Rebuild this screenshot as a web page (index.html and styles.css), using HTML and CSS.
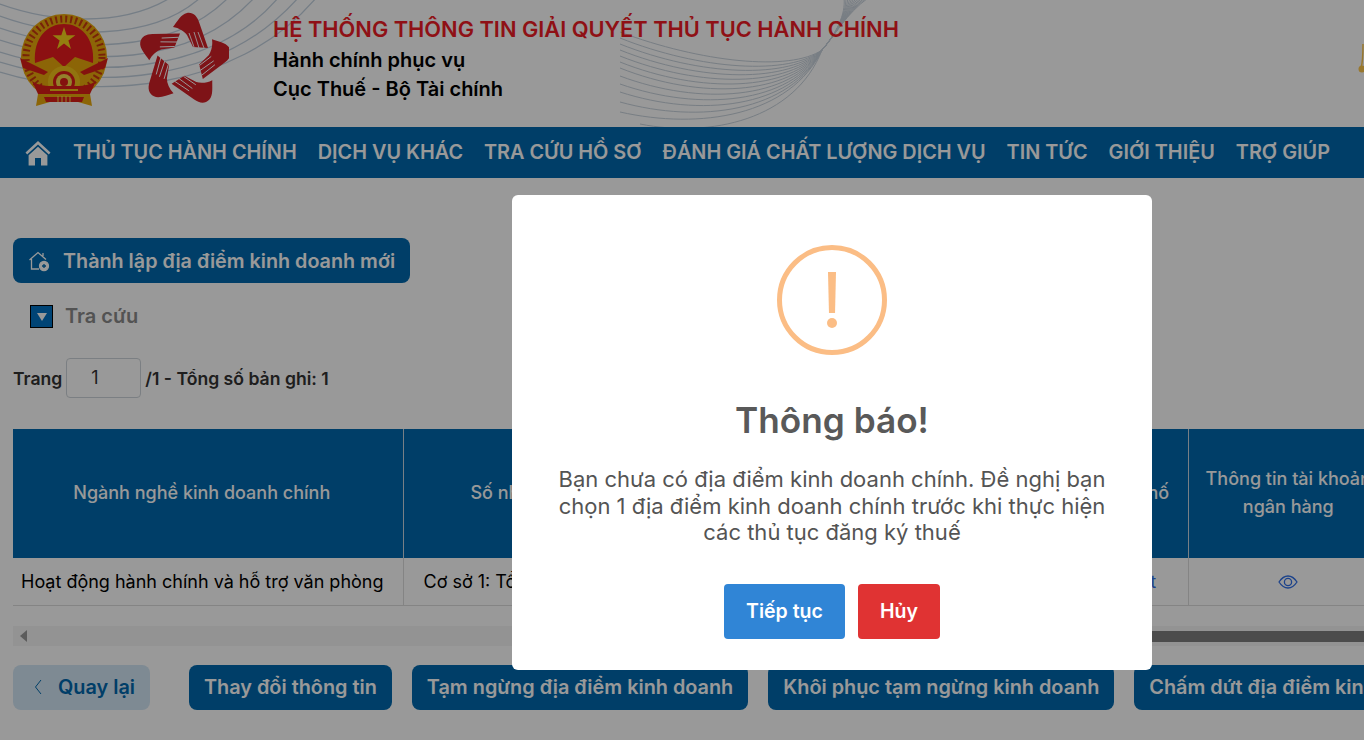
FILE: index.html
```html
<!DOCTYPE html>
<html lang="vi">
<head>
    <meta charset="UTF-8">
    <meta name="viewport" content="width=device-width, initial-scale=1.0">
    <title>Hệ thống thông tin giải quyết thủ tục hành chính</title>
    <link rel="stylesheet" href="styles.css">
</head>
<body>
    <header class="site-header">
        <svg class="header-waves" width="1364" height="127" viewBox="0 0 1364 127" fill="none">
            <g stroke="#c4d2e0" stroke-width="1.3">
                <path d="M0 4C50 22 120 28 170 -2"/>
                <path d="M0 16C60 38 150 42 200 -2"/>
                <path d="M0 28C70 52 170 56 228 -2"/>
                <path d="M0 40C80 66 190 68 254 -2"/>
                <path d="M0 52C80 78 210 78 278 -2"/>
                <path d="M0 62C90 90 220 86 298 -2"/>
                <path d="M0 72C90 100 235 94 316 -2"/>
            </g>
            <g stroke="#c8d2dc" stroke-width="1">
                <path d="M620 32C700 62 790 72 822 50C836 34 846 14 868 -2"/>
                <path d="M620 38C700 70 790 76 822 50C836 34 846 14 866 -2"/>
                <path d="M620 44C700 76 790 80 822 50C836 34 846 14 864 -2"/>
                <path d="M620 50C700 82 790 84 822 50C836 34 846 14 862 -2"/>
                <path d="M620 56C700 88 790 88 822 50C836 34 846 14 860 -2"/>
                <path d="M620 62C700 94 790 92 822 50C836 34 846 14 858 -2"/>
                <path d="M620 68C700 100 790 96 822 50C836 34 846 14 856 -2"/>
                <path d="M620 76C700 106 790 100 822 50C836 34 846 14 854 -2"/>
                <path d="M620 84C700 112 790 104 822 50C836 34 846 14 852 -2"/>
                <path d="M620 92C700 118 790 108 822 50C836 34 846 14 850 -2"/>
                <path d="M620 102C700 124 790 112 822 50C836 34 846 14 848 -2"/>
                <path d="M620 112C700 130 790 116 822 50C836 34 846 14 846 -2"/>
                <path d="M640 124C710 138 795 120 822 50C836 34 846 14 844 -2"/>
            </g>
        </svg>
        <svg class="logo-emblem" width="92" height="94" viewBox="0 0 92 94">
            <circle cx="46" cy="44" r="43" fill="#e9a90c"/>
            <circle cx="46" cy="44" r="38" fill="none" stroke="#c93a10" stroke-width="7" stroke-dasharray="2 3"/>
            <path d="M17 50C15 24 30 11 46 11C62 11 77 24 75 50L57 44L46 54L35 44Z" fill="#e91b1e"/>
            <path d="M46 14L48.7 22.3L57.4 22.3L50.4 27.4L53 36L46 30.6L39 36L41.6 27.4L34.6 22.3L43.3 22.3Z" fill="#f7d21c"/>
            <path d="M2 45L30 59L26 62L5 55Z" fill="#dc1f18"/>
            <path d="M90 45L62 59L66 62L87 55Z" fill="#dc1f18"/>
            <circle cx="46" cy="69" r="16" fill="#f2c21a"/>
            <circle cx="46" cy="69" r="11" fill="#dc1f18"/>
            <circle cx="46" cy="69" r="8" fill="#f7d84a"/>
            <circle cx="46" cy="69" r="4" fill="#dc1f18"/>
            <path d="M14 68C22 74 34 73 46 73C58 73 70 74 78 68L72 81H20Z" fill="#dc1f18"/>
            <path d="M32 77H60" stroke="#f2c21a" stroke-width="2"/>
            <path d="M20 81H72L74 93L60 89H32L18 93Z" fill="#e9a90c"/>
            <path d="M26 84H66L64 89H28Z" fill="#dc1f18"/>
            <path d="M40 89V83M44 89V83M48 89V83M52 89V83" stroke="#f7d84a" stroke-width="1"/>
        </svg>
        <svg class="logo-hands" width="90" height="96" viewBox="-45 -48 90 96">
            <defs>
                <g id="hand">
                    <path d="M-11 -33C-7 -38 -3 -46 3 -47C9 -48 13 -44 15 -38L24 -12L9 -13L3 -25C0 -29 -5 -32 -11 -33Z" fill="#d32027"/>
                    <path d="M5 -27L10 -13M10 -28L15 -12M14 -28L20 -12" stroke="#ffffff" stroke-width="0.9" fill="none"/>
                </g>
            </defs>
            <use href="#hand"/>
            <use href="#hand" transform="rotate(72)"/>
            <use href="#hand" transform="rotate(144)"/>
            <use href="#hand" transform="rotate(216)"/>
            <use href="#hand" transform="rotate(288)"/>
        </svg>
        <div class="header-text">
            <div class="header-title">HỆ THỐNG THÔNG TIN GIẢI QUYẾT THỦ TỤC HÀNH CHÍNH</div>
            <div class="header-line">Hành chính phục vụ</div>
            <div class="header-line">Cục Thuế - Bộ Tài chính</div>
        </div>
        <svg class="header-ornament" width="6" height="30" viewBox="0 0 6 30">
            <path d="M5 0C5 10 5 18 3 24" stroke="#ffc94d" stroke-width="1.5" fill="none"/>
            <circle cx="4" cy="25" r="3.5" fill="#ffc94d"/>
        </svg>
    </header>

    <nav class="main-nav">
        <svg class="nav-home" width="26" height="26" viewBox="0 0 26 26" fill="#ffffff">
            <path d="M13 1L0.5 12.5L2.2 14.4L13 4.6L23.8 14.4L25.5 12.5Z"/>
            <path d="M13 6.8L3.6 15.2V25.5H10V18H16V25.5H22.4V15.2Z"/>
        </svg>
        <a class="nav-link">THỦ TỤC HÀNH CHÍNH</a>
        <a class="nav-link">DỊCH VỤ KHÁC</a>
        <a class="nav-link">TRA CỨU HỒ SƠ</a>
        <a class="nav-link">ĐÁNH GIÁ CHẤT LƯỢNG DỊCH VỤ</a>
        <a class="nav-link">TIN TỨC</a>
        <a class="nav-link">GIỚI THIỆU</a>
        <a class="nav-link">TRỢ GIÚP</a>
    </nav>

    <main class="content">
        <button class="btn btn-new">
            <svg width="22" height="22" viewBox="0 0 22 22" fill="none" stroke="#ffffff" stroke-width="1.3">
                <path d="M1.5 10L10 2.5L18 9.5M3.5 9V19H11M15 3V6"/>
                <circle cx="16" cy="16" r="4.5" fill="#ffffff"/>
                <path d="M14 16H18M16 14V18" stroke="#0068ad"/>
            </svg>
            Thành lập địa điểm kinh doanh mới
        </button>

        <div class="search-toggle">
            <span class="toggle-box"></span>
            <span class="toggle-label">Tra cứu</span>
        </div>

        <div class="pager">
            <span>Trang</span>
            <span class="pager-input">1</span>
            <span>/1 - Tổng số bản ghi: 1</span>
        </div>

        <div class="table-wrap">
            <table class="data-table">
                <colgroup>
                    <col class="col-industry">
                    <col class="col-address">
                    <col class="col-city">
                    <col class="col-bank">
                </colgroup>
                <thead>
                    <tr>
                        <th>Ngành nghề kinh doanh chính</th>
                        <th>Số nhà, đường phố, tổ/xóm/ấp/thôn, xã/phường/thị trấn</th>
                        <th>Tỉnh, thành phố</th>
                        <th>Thông tin tài khoản ngân hàng</th>
                    </tr>
                </thead>
                <tbody>
                    <tr>
                        <td>Hoạt động hành chính và hỗ trợ văn phòng</td>
                        <td>Cơ sở 1: Tổ dân phố</td>
                        <td class="cell-link">Xem chi tiết</td>
                        <td class="cell-icon">
                            <svg width="20" height="14" viewBox="0 0 20 14" fill="none" stroke="#2f6fe8" stroke-width="1.3">
                                <path d="M1 7C4 2.5 7 1 10 1S16 2.5 19 7C16 11.5 13 13 10 13S4 11.5 1 7Z"/>
                                <circle cx="10" cy="7" r="3.6"/>
                            </svg>
                        </td>
                    </tr>
                </tbody>
            </table>
        </div>

        <div class="scroll-track">
            <span class="scroll-arrow"></span>
            <span class="scroll-thumb"></span>
        </div>

        <div class="action-row">
            <button class="btn btn-back">
                <svg width="8" height="16" viewBox="0 0 8 16" fill="none" stroke="#0068ad" stroke-width="1">
                    <path d="M7 1L1.5 8L7 15"/>
                </svg>
                Quay lại
            </button>
            <button class="btn">Thay đổi thông tin</button>
            <button class="btn">Tạm ngừng địa điểm kinh doanh</button>
            <button class="btn">Khôi phục tạm ngừng kinh doanh</button>
            <button class="btn">Chấm dứt địa điểm kinh doanh</button>
        </div>
    </main>

    <div class="modal-backdrop">
        <div class="modal">
            <div class="modal-icon">
                <span class="modal-icon-bar"></span>
                <span class="modal-icon-dot"></span>
            </div>
            <h2 class="modal-title">Thông báo!</h2>
            <p class="modal-text">Bạn chưa có địa điểm kinh doanh chính. Đề nghị bạn chọn 1 địa điểm kinh doanh chính trước khi thực hiện các thủ tục đăng ký thuế</p>
            <div class="modal-actions">
                <button class="modal-btn modal-btn-ok">Tiếp tục</button>
                <button class="modal-btn modal-btn-cancel">Hủy</button>
            </div>
        </div>
    </div>
</body>
</html>
```

FILE: styles.css
```css
* {
    margin: 0;
    padding: 0;
    box-sizing: border-box;
}

html, body {
    height: 100%;
    overflow: hidden;
}

body {
    font-family: Inter, "Noto Sans", "Liberation Sans", sans-serif;
    background: white;
    color: #000;
}

/* Header */
.site-header {
    position: relative;
    height: 127px;
    display: flex;
    align-items: flex-start;
    overflow: hidden;
}

.header-waves {
    position: absolute;
    top: 0;
    left: 0;
}

.header-ornament {
    position: absolute;
    top: 44px;
    right: 0;
}

.logo-emblem {
    position: relative;
    flex: none;
    margin: 13px 0 0 18px;
}

.logo-hands {
    position: relative;
    flex: none;
    margin: 12px 0 0 29px;
}

.header-text {
    position: relative;
    margin: 15px 0 0 44px;
}

.header-title {
    margin-bottom: 2px;
    font-size: 21.8px;
    font-weight: 600;
    line-height: 29px;
    color: #ee1c25;
}

.header-line {
    font-size: 20px;
    font-weight: 600;
    line-height: 29px;
}

/* Nav */
.main-nav {
    height: 51px;
    display: flex;
    align-items: center;
    gap: 21px;
    padding: 0 0 2px 25px;
    background: #0068ad;
}

.nav-home {
    flex: none;
    margin: 2px 1px 0 0;
}

.nav-link {
    font-size: 19.85px;
    font-weight: 600;
    color: white;
    white-space: nowrap;
}

/* Page content */
.content {
    padding: 60px 0 0 13px;
}

.btn {
    display: inline-flex;
    align-items: center;
    flex: none;
    height: 45px;
    padding: 0 15px;
    border: none;
    border-radius: 8px;
    background: #0068ad;
    color: white;
    font-family: inherit;
    font-size: 19.85px;
    font-weight: 600;
    white-space: nowrap;
}

.btn-new {
    gap: 13px;
    font-size: 19.75px;
}

.search-toggle {
    display: flex;
    align-items: center;
    gap: 12px;
    margin: 21px 0 0 17px;
}

.toggle-box {
    position: relative;
    width: 23px;
    height: 23px;
    border: 1px solid #000;
    background: #0072c4;
}

.toggle-box::after {
    content: '';
    position: absolute;
    top: 7px;
    left: 6px;
    border-left: 5px solid transparent;
    border-right: 5px solid transparent;
    border-top: 8px solid white;
}

.toggle-label {
    font-size: 20px;
    font-weight: 600;
    color: #8a8a8a;
}

.pager {
    display: flex;
    align-items: center;
    gap: 4px;
    margin-top: 30px;
    font-size: 17.6px;
    font-weight: 600;
    color: #333;
}

.pager-input {
    width: 75px;
    height: 40px;
    border: 1px solid #ced4da;
    border-radius: 4px;
    padding-left: 24px;
    font-size: 18px;
    font-weight: 400;
    line-height: 38px;
}

/* Table */
.table-wrap {
    margin-top: 31px;
    overflow: hidden;
}

.data-table {
    width: 1375px;
    table-layout: fixed;
    border-collapse: collapse;
}

.col-industry { width: 390px; }
.col-address { width: 613px; }
.col-city { width: 172px; }
.col-bank { width: 200px; }

.data-table th {
    height: 129px;
    padding: 7px 8px 9px;
    background: #0068ad;
    border-left: 1px solid #c8d4de;
    color: white;
    font-size: 18px;
    font-weight: 500;
    line-height: 28px;
}

.data-table th:first-child {
    padding-right: 20px;
    border-left: none;
}

.data-table th:nth-child(2) {
    padding-right: 12px;
}

.data-table td:first-child {
    border-left: none;
}

.data-table td {
    height: 47px;
    padding: 0 8px;
    border-left: 1px solid #ddd;
    border-bottom: 1px solid #ddd;
    font-size: 18px;
    white-space: nowrap;
    overflow: hidden;
}

.data-table td:nth-child(2) {
    padding-left: 20px;
}

.data-table td.cell-link {
    padding: 0 0 0 8px;
    color: #2f6fe8;
    text-align: center;
}

.cell-icon {
    text-align: center;
}

.cell-icon svg {
    margin-bottom: 2px;
    vertical-align: middle;
}

.scroll-track {
    position: relative;
    height: 20px;
    margin-top: 20px;
    background: #f5f5f5;
}

.scroll-arrow {
    position: absolute;
    top: 4px;
    left: 7px;
    border-top: 6.5px solid transparent;
    border-bottom: 6.5px solid transparent;
    border-right: 7px solid #9a9a9a;
}

.scroll-thumb {
    position: absolute;
    top: 5px;
    left: 1100px;
    right: 0;
    height: 11px;
    background: #7f7f7f;
}

.action-row {
    display: flex;
    gap: 20px;
    margin-top: 19px;
}

.btn-back {
    width: 137px;
    margin-right: 19px;
    padding-left: 21px;
    gap: 16px;
    background: #d3e6f5;
    color: #0068ad;
}

/* Modal */
.modal-backdrop {
    position: fixed;
    inset: 0;
    display: flex;
    align-items: flex-start;
    padding: 195px 0 0 512px;
    background: rgba(0, 0, 0, 0.4);
}

.modal {
    width: 640px;
    height: 475px;
    display: flex;
    flex-direction: column;
    align-items: center;
    padding-top: 50px;
    border-radius: 6px;
    background: white;
}

.modal-icon {
    position: relative;
    width: 110px;
    height: 110px;
    border: 5px solid #fbbd85;
    border-radius: 50%;
}

.modal-icon-bar {
    position: absolute;
    top: 22px;
    left: 46px;
    width: 8px;
    height: 41px;
    background: #fbbd85;
    clip-path: polygon(0 0, 100% 0, 88% 100%, 12% 100%);
}

.modal-icon-dot {
    position: absolute;
    top: 68px;
    left: 45px;
    width: 10px;
    height: 10px;
    border-radius: 50%;
    background: #fbbd85;
}

.modal-title {
    margin-top: 43px;
    font-size: 35.2px;
    font-weight: 600;
    line-height: 44px;
    color: #595959;
}

.modal-text {
    width: 560px;
    margin-top: 24px;
    font-size: 22px;
    line-height: 26.6px;
    text-align: center;
    color: #545454;
}

.modal-actions {
    display: flex;
    gap: 13px;
    margin-top: 38px;
}

.modal-btn {
    height: 55px;
    border: none;
    border-radius: 4px;
    color: white;
    font-family: inherit;
    font-size: 19.5px;
    font-weight: 600;
}

.modal-btn-ok {
    width: 121px;
    background: #3085d6;
}

.modal-btn-cancel {
    width: 82px;
    background: #e03333;
}
```
